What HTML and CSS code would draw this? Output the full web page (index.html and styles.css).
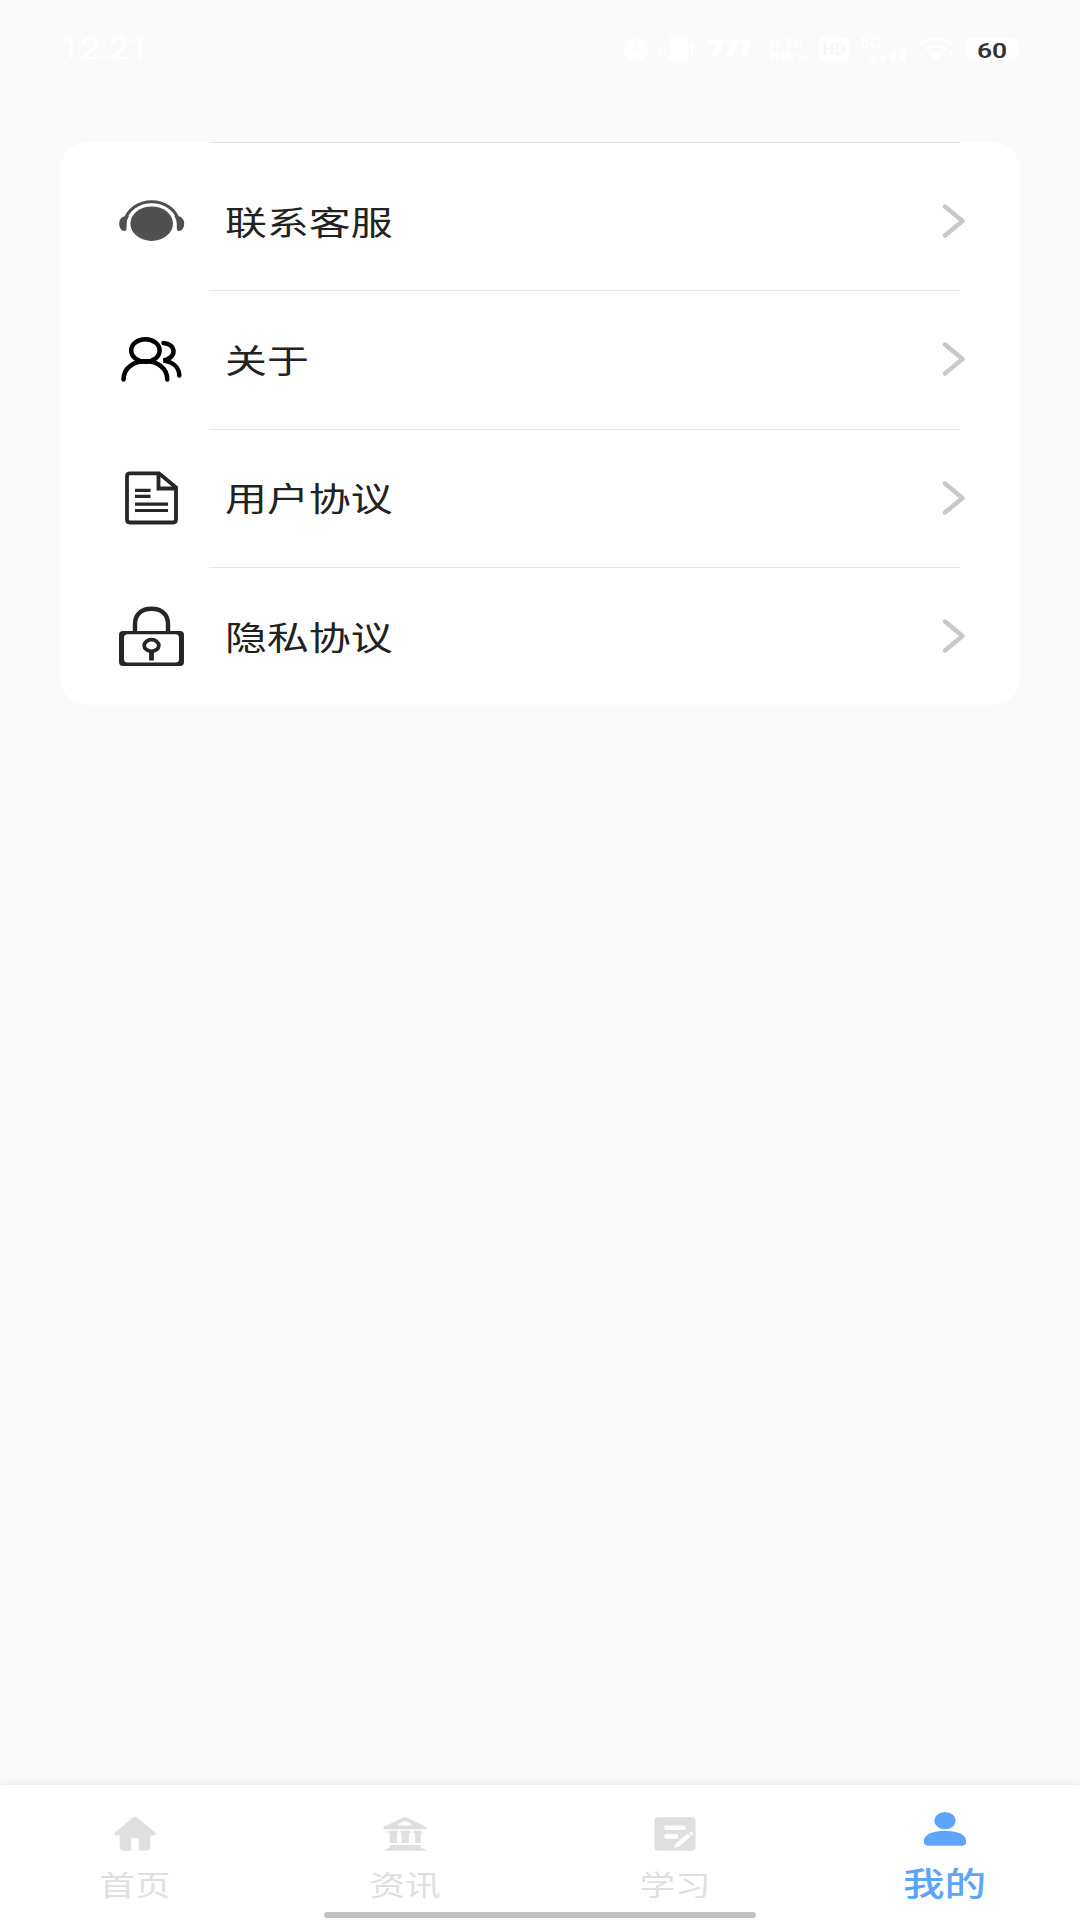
FILE: index.html
```html
<!DOCTYPE html>
<html lang="zh-CN">
<head>
    <meta charset="UTF-8">
    <meta name="viewport" content="width=device-width, initial-scale=1.0">
    <title>我的</title>
    <link rel="stylesheet" href="styles.css">
</head>
<body>
    <header class="status-bar">
        <div class="time">12:21</div>
        <div class="status-icons">
            <svg class="alarm" width="30" height="26" viewBox="0 0 30 26">
                <ellipse cx="14" cy="14" rx="13" ry="11" fill="#fff"/>
                <path d="M1 6l6-4M27 6l-6-4" stroke="#fff" stroke-width="2"/>
                <path d="M14 8v7h6" fill="none" stroke="#fafafa" stroke-width="2"/>
            </svg>
            <svg class="vibrate" width="38" height="26" viewBox="0 0 38 26">
                <rect x="9" y="1" width="19" height="24" rx="4" fill="#fff"/>
                <path d="M5 7v12M1 10v6M32 7v12M36 10v6" stroke="#fff" stroke-width="2"/>
            </svg>
            <svg class="stripes" width="46" height="20" viewBox="0 0 46 20">
                <path d="M0 1h17l-8 17H3l6-12H2zM19 1h12l-8 17h-6l6-12h-6zM33 1h12l-8 17h-6l6-12h-6z" fill="#fff"/>
            </svg>
            <div class="speed"><span>0.10</span><span>KB/s</span></div>
            <div class="hd">HD</div>
            <div class="signal">
                <span>5G</span>
                <svg width="36" height="14" viewBox="0 0 36 14">
                    <path d="M3 9v4M13 7v6M23 4v9M33 1v12" stroke="#fff" stroke-width="5"/>
                </svg>
            </div>
            <svg class="wifi" width="40" height="24" viewBox="0 0 40 24">
                <path d="M2 8q16-13 32 0M8 13q10-8 20 0" fill="none" stroke="#fff" stroke-width="3"/>
                <path d="M12 17q6-4 12 0l-6 6zM31 17l3-4 3 4zM31 19h6l-3 4z" fill="#fff"/>
            </svg>
            <div class="battery"><span>60</span></div>
        </div>
    </header>

    <main class="content">
        <div class="menu">
            <!-- Customer service -->
            <div class="menu-item">
                <svg class="menu-icon" viewBox="0 0 66 60">
                    <ellipse cx="32.7" cy="32.7" rx="21.3" ry="17.2" fill="#505050"/>
                    <path d="M6 30A27 22.500 0 0 1 59.400 30" fill="none" stroke="#505050" stroke-width="3"/>
                    <path d="M4.500 25.500C1.500 27 .2 29.500 .2 32.500C.2 37 2.500 40 5.500 40Q7.600 40 7.600 37.500V33Q7.600 28.500 10 25zM60.900 25.500c3 1.500 4.300 4 4.300 7 0 4.500-2.300 7.500-5.300 7.500q-2.100 0-2.100-2.500V33Q57.800 28.500 55.400 25z" fill="#505050"/>
                </svg>
                <div class="menu-body">
                    <span class="menu-text">联系客服</span>
                    <svg class="arrow" viewBox="0 0 24 34"><path d="M3 2.500L20.500 17 3 31.500"/></svg>
                </div>
            </div>
            <!-- About -->
            <div class="menu-item">
                <svg class="menu-icon" viewBox="0 0 66 60">
                    <g fill="none" stroke="#000" stroke-width="4.500" stroke-linecap="round">
                        <ellipse cx="26.400" cy="21.500" rx="14.200" ry="11.200"/>
                        <path d="M4.500 50.500C4.500 39.500 14 32.300 26.400 32.300S48.300 39.500 48.300 50.500"/>
                        <path d="M44.500 14C50.500 14.500 54.500 18 54.500 22.500S50 30.500 44.500 31.500C54 33 60.300 38.500 60.300 46.500"/>
                    </g>
                </svg>
                <div class="menu-body">
                    <span class="menu-text">关于</span>
                    <svg class="arrow" viewBox="0 0 24 34"><path d="M3 2.500L20.500 17 3 31.500"/></svg>
                </div>
            </div>
            <!-- User agreement -->
            <div class="menu-item">
                <svg class="menu-icon" viewBox="0 0 66 60">
                    <g fill="none" stroke="#262626" stroke-width="3.800">
                        <path d="M11 5.400H40L57 19.500V51.500q0 3-3 3H11q-3 0-3-3V8.400q0-3 3-3z"/>
                        <path d="M39.500 5.500V20.500H57"/>
                        <path d="M16 22.400H31.500M16 28.400H31.500M16 36.200H49M16 42.500H49" stroke-width="3.200"/>
                    </g>
                </svg>
                <div class="menu-body">
                    <span class="menu-text">用户协议</span>
                    <svg class="arrow" viewBox="0 0 24 34"><path d="M3 2.500L20.500 17 3 31.500"/></svg>
                </div>
            </div>
            <!-- Privacy agreement -->
            <div class="menu-item">
                <svg class="menu-icon" viewBox="0 0 66 60">
                    <path d="M0 29q0-4 4-4H61q4 0 4 4V56q0 4-4 4H4q-4 0-4-4zM8.500 28.200q-3.500 0-3.500 3.500V53q0 3.500 3.500 3.500H56.500q3.500 0 3.500-3.500V31.700q0-3.500-3.500-3.500z" fill="#262626" fill-rule="evenodd"/>
                    <g fill="none" stroke="#262626">
                        <path d="M16 26V18C16 8 23 2.800 32.500 2.800S49 8 49 18V26" stroke-width="4.400"/>
                        <ellipse cx="32.500" cy="39.500" rx="7.300" ry="5.800" stroke-width="3.800"/>
                        <path d="M32.500 45V54.500" stroke-width="4.800"/>
                    </g>
                </svg>
                <div class="menu-body">
                    <span class="menu-text">隐私协议</span>
                    <svg class="arrow" viewBox="0 0 24 34"><path d="M3 2.500L20.500 17 3 31.500"/></svg>
                </div>
            </div>
        </div>
    </main>

    <nav class="tabbar">
        <div class="tab">
            <svg class="tab-icon" viewBox="0 0 46 36">
                <path d="M21 .8q2-1.200 4 0L44 16.500q1.500 3-1.500 3H39V31q0 4.500-5 4.500H27V24q0-1.500-1.500-1.500h-5q-1.500 0-1.500 1.500V35.500H12q-5 0-5-4.500V19.500H3.500Q.5 19.500 2 16.500z"/>
            </svg>
            <span class="tab-text">首页</span>
        </div>
        <div class="tab">
            <svg class="tab-icon" viewBox="0 0 46 36">
                <path d="M21 .8q2-1 4 0L45 10.500q1.500 2-.5 2.500H1.500Q-.5 12.500 1 10.500zM22.500 4.800Q20 5 15 9H31Q26 5 22.500 4.800zM5.500 14.500H15.500V17H14.500V27.500H7V17H5.500zM18.500 14.500H28.500V17H27V27.500H19.500V17H18.500zM32 14.500H41V17H39.500V27.500H33.500V17H32zM7 29.500H39.500V31.500L45.500 35.500H1L7 31.500z" fill-rule="evenodd"/>
            </svg>
            <span class="tab-text">资讯</span>
        </div>
        <div class="tab">
            <svg class="tab-icon" viewBox="0 0 46 36">
                <rect x="1.500" y=".5" width="43" height="35" rx="4"/>
                <path d="M14 11.500H32M14 20.500H24" fill="none" stroke="#fff" stroke-width="4.800" stroke-linecap="round"/>
                <path d="M22 32.500L24 27.500 36.500 17.500 39.500 20.500 27.500 31zM37.500 16.500L39.500 15 42.500 18 40.500 19.500z" fill="#fff"/>
            </svg>
            <span class="tab-text">学习</span>
        </div>
        <div class="tab active">
            <svg class="tab-icon" viewBox="0 0 46 36">
                <ellipse cx="23" cy="9.200" rx="11.200" ry="9"/>
                <path d="M1 30C1 23.500 11 19.700 23 19.700S45 23.500 45 30V31.500Q45 35.500 40.500 35.500H5.500Q1 35.500 1 31.500z"/>
            </svg>
            <span class="tab-text">我的</span>
        </div>
        <div class="home-indicator"></div>
    </nav>
</body>
</html>
```
FILE: styles.css
```css
body {
    font-family: Roboto, "Noto Sans CJK SC", sans-serif;
    background: #fafafa;
    color: #222222;
    margin: 0;
    height: 1920px;
    display: flex;
    flex-direction: column;
    overflow: hidden;
}

/* Status bar */
.status-bar {
    display: flex;
    justify-content: space-between;
    align-items: center;
    height: 98px;
    padding: 0 59px 0 60px;
    box-sizing: border-box;
    color: #ffffff;
}

.time {
    font-size: 31px;
    line-height: 36px;
    transform: scaleX(1.16);
    transform-origin: left;
}

.status-icons {
    display: flex;
    align-items: center;
}

.vibrate {
    margin-left: 8px;
}

.stripes {
    margin-left: 10px;
}

.speed {
    display: flex;
    flex-direction: column;
    width: 36px;
    margin-left: 16px;
    font-size: 13px;
    line-height: 13px;
    font-weight: 500;
}

.speed span {
    transform: scaleX(1.28);
    transform-origin: left;
}

.hd {
    width: 30px;
    height: 24px;
    margin-left: 13px;
    border-radius: 5px;
    background: #ffffff;
    color: #f7f7f7;
    font-size: 17px;
    line-height: 24px;
    font-weight: bold;
    text-align: center;
}

.signal {
    display: flex;
    flex-direction: column;
    width: 46px;
    margin-left: 11px;
    font-size: 17px;
    line-height: 12px;
    font-weight: bold;
}

.signal svg {
    align-self: flex-end;
}

.wifi {
    margin-left: 12px;
}

.battery {
    width: 50px;
    height: 22px;
    margin-left: 8px;
    margin-right: 5px;
    border-radius: 7px;
    background: #ffffff;
    color: #333333;
    font-size: 21px;
    line-height: 24px;
    font-weight: 600;
    text-align: center;
    box-shadow: 4px 0 0 -1px #ffffff;
}

.battery span {
    display: inline-block;
    transform: translate(1px, 1px) scaleX(1.26);
}

/* Menu card */
.content {
    flex: 1;
    padding: 44px 60px 0;
}

.menu {
    background: #ffffff;
    border-radius: 30px / 26px;
    height: 563px;
    padding-left: 59px;
    box-sizing: border-box;
    display: grid;
    grid-template-rows: 148px 138.5px 138.5px 138px;
}

.menu-item {
    display: flex;
    align-items: center;
    gap: 24px;
}

.menu-item:first-child .menu-icon,
.menu-item:first-child .menu-text,
.menu-item:first-child .arrow {
    margin-top: 10px;
}

.menu-icon {
    width: 66px;
    height: 60px;
}

.menu-body {
    display: flex;
    align-items: center;
    justify-content: space-between;
    width: 751px;
    height: 100%;
    padding-left: 16px;
    box-sizing: border-box;
    border-top: 1px solid #e4e4e4;
}

.menu-text {
    font-size: 33px;
    line-height: 48px;
    transform: translateY(2px) scaleX(1.27);
    transform-origin: left;
}

.arrow {
    width: 24px;
    height: 34px;
    margin-right: -6px;
    margin-bottom: 1px;
    fill: none;
    stroke: #c8c8c8;
    stroke-width: 4.4;
    stroke-linecap: round;
    stroke-linejoin: round;
}

/* Bottom tabs */
.tabbar {
    position: relative;
    display: flex;
    height: 135px;
    background: #ffffff;
    box-shadow: 0 -1px 8px rgba(0, 0, 0, 0.07);
}

.tab {
    flex: 1;
    display: flex;
    flex-direction: column;
    align-items: center;
    padding-top: 31px;
    color: #dfdfdf;
}

.tab-icon {
    width: 44px;
    height: 36px;
    fill: currentColor;
}

.tab-text {
    margin-top: 15px;
    font-size: 28px;
    line-height: 40px;
    transform: scaleX(1.27);
}

.active {
    padding-top: 26px;
    color: #5ca5fb;
}

.active .tab-text {
    margin-top: 18px;
    font-size: 32.5px;
    font-weight: 500;
    transform: scaleX(1.28);
}

.home-indicator {
    position: absolute;
    left: 324px;
    bottom: 2px;
    width: 432px;
    height: 6px;
    border-radius: 3px;
    background: #c1c1c1;
}
```
